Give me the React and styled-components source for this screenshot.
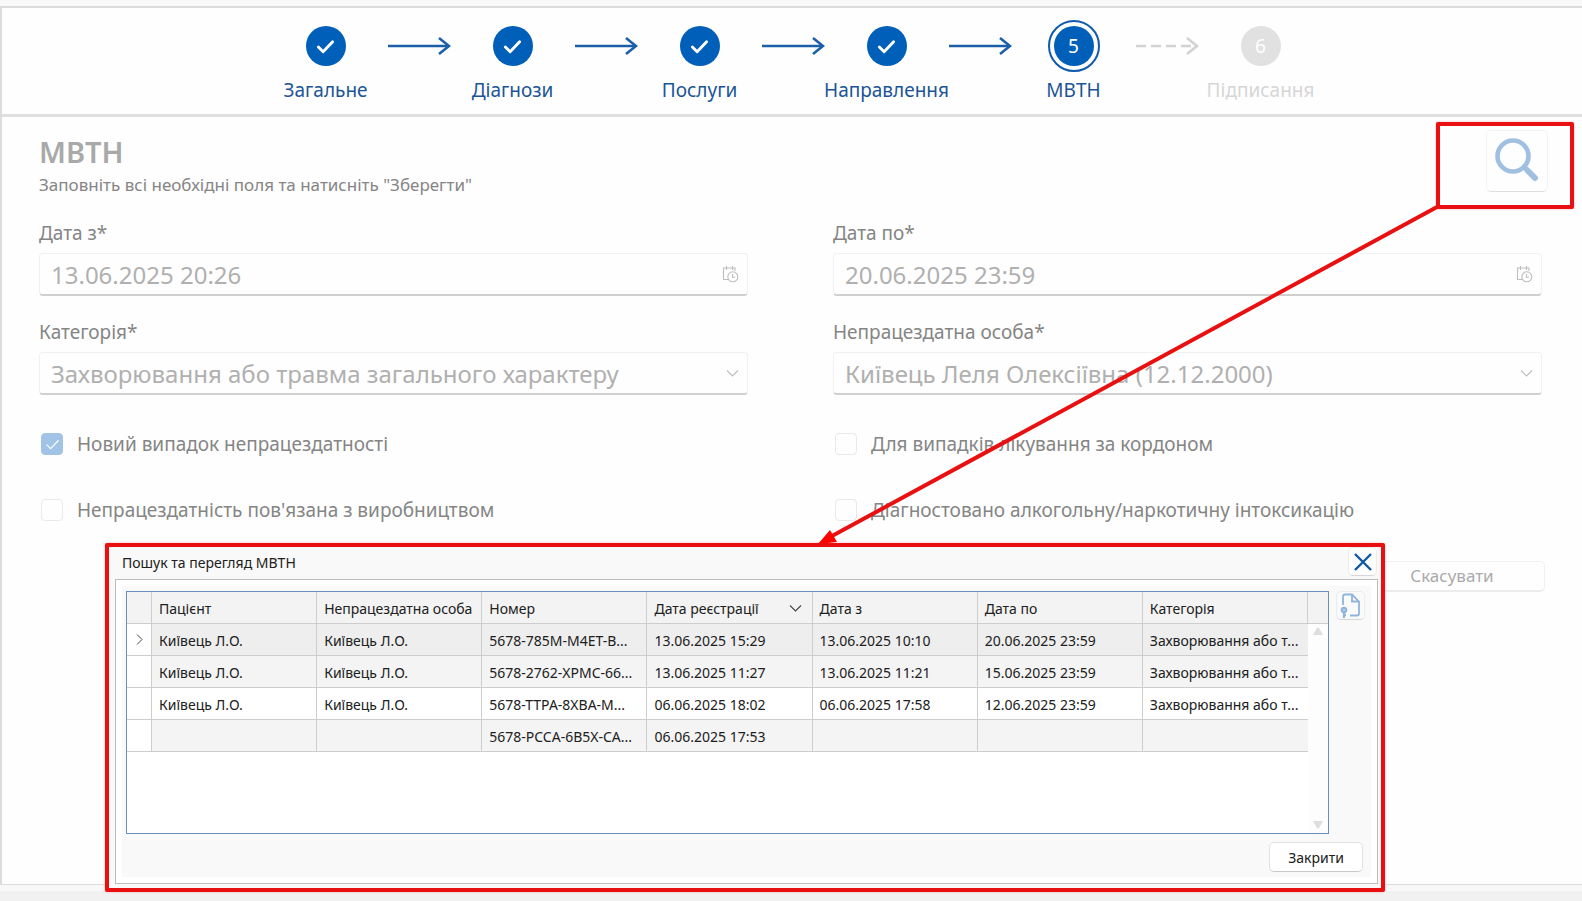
import React from "react";
import styled, { createGlobalStyle, css } from "styled-components";

const GlobalStyle = createGlobalStyle`
  * {
    box-sizing: border-box;
  }
  body {
    margin: 0;
    background: #fdfdfd;
    font-family: "Noto Sans", "Open Sans", sans-serif;
    color: #202020;
  }
  input, select, button {
    font-family: inherit;
  }
`;

const Page = styled.div`
  position: relative;
  display: flex;
  flex-direction: column;
  min-height: 100vh;
  overflow: hidden;
`;
const TopStrip = styled.div`
  height: 6px;
  background: #f8f8f8;
`;
const Window = styled.main`
  flex: 1;
  display: flex;
  flex-direction: column;
  border: 2px solid #dcdcdc;
  border-right: none;
  border-bottom-width: 1px;
  background: #fefefe;
`;
const BottomStrip = styled.div`
  height: 16px;
  border-top: 6px solid #f8f8f8;
  background: #f1f1f1;
`;

const Steps = styled.ol`
  display: flex;
  justify-content: center;
  list-style: none;
  margin: 0;
  padding: 12px 0 11px 2px;
  border-bottom: 3px solid #dfdfdf;
`;
const Step = styled.li`
  display: flex;
  flex-direction: column;
  align-items: center;
  width: 62px;
  color: ${({ $pending }) => ($pending ? "#d6d6d6" : "#1b5597")};
`;
const StepMarker = styled.span`
  display: flex;
  align-items: center;
  justify-content: center;
  width: 52px;
  height: 52px;
  border-radius: 50%;
  border: 2px solid ${({ $current }) => ($current ? "#0f5cae" : "transparent")};
`;
const StepCircle = styled.span`
  display: flex;
  align-items: center;
  justify-content: center;
  width: 40px;
  height: 40px;
  border-radius: 50%;
  background: ${({ $pending }) => ($pending ? "#e1e1e1" : "#005fb8")};
  color: #fff;
  font-size: 19px;
`;
const StepLabel = styled.span`
  margin-top: 5px;
  font-size: 19px;
  line-height: 26px;
  white-space: nowrap;
`;
const StepArrow = styled.li`
  display: flex;
  align-items: center;
  justify-content: center;
  width: 125px;
  height: 52px;
`;

const Form = styled.form`
  flex: 1;
  padding: 19px 37px 20px;
`;
const FormHeader = styled.header`
  display: flex;
  justify-content: space-between;
  height: 84px;
`;
const Title = styled.h1`
  margin: 0;
  font-size: 29px;
  font-weight: 600;
  line-height: 32px;
  color: #a9a9a9;
`;
const Subtitle = styled.p`
  margin: 5px 0 0;
  font-size: 17px;
  line-height: 24px;
  color: #858585;
`;
const SearchButton = styled.button`
  display: flex;
  align-items: center;
  justify-content: center;
  width: 62px;
  height: 62px;
  margin: -6px -3px 0 0;
  padding: 0;
  border: 1px solid #f3f3f3;
  border-bottom-color: #dedede;
  border-radius: 5px;
  background: #fefefe;
`;
const FieldGrid = styled.div`
  display: grid;
  grid-template-columns: 1fr 1fr;
  column-gap: 85px;
  row-gap: 23px;
  padding-right: 3px;
`;
const Field = styled.label`
  display: flex;
  flex-direction: column;
  gap: 7px;
  font-size: 19px;
  line-height: 26px;
  color: #858585;
`;
const FieldBox = styled.span`
  display: flex;
  align-items: center;
  height: 43px;
  padding-right: 8px;
  border: 1px solid #f1f1f1;
  border-bottom: 2px solid #cfcfcf;
  border-radius: 4px;
`;
const controlStyle = css`
  flex: 1;
  min-width: 0;
  height: 100%;
  padding: 0 11px;
  border: none;
  outline: none;
  background: transparent;
  color: #b0b0b0;
  font-size: 24px;
`;
const TextInput = styled.input`
  ${controlStyle}
`;
const Select = styled.select`
  ${controlStyle}
  appearance: none;
`;
const CheckGrid = styled.div`
  display: grid;
  grid-template-columns: 1fr 1fr;
  column-gap: 85px;
  row-gap: 40px;
  margin-top: 36px;
  padding-right: 3px;
`;
const CheckLabel = styled.label`
  display: flex;
  align-items: center;
  gap: 14px;
  padding-left: 2px;
  font-size: 19px;
  line-height: 26px;
  color: #858585;
`;
const CheckMark = styled.span`
  display: grid;
  place-items: center;
  > * {
    grid-area: 1 / 1;
  }
`;
const Checkbox = styled.input`
  appearance: none;
  width: 22px;
  height: 22px;
  margin: 0;
  border: 1px solid #e9e9e9;
  border-radius: 4px;
  &:checked {
    border-color: #a0c3e6;
    background: #a0c3e6;
  }
`;
const FormActions = styled.div`
  display: flex;
  justify-content: flex-end;
  margin-top: 38px;
`;
const CancelButton = styled.button`
  width: 186px;
  height: 31px;
  padding: 0;
  border: 1px solid #f1f1f1;
  border-bottom: 2px solid #ececec;
  border-radius: 5px;
  background: #fefefe;
  color: #ababab;
  font-size: 17px;
  line-height: 24px;
`;

const Dialog = styled.section`
  position: absolute;
  top: 543px;
  left: 105px;
  right: 197px;
  border: 4px solid #e81010;
  border-radius: 2px;
  background: #f9f9f9;
  box-shadow: 0 0 2px #ff9c9c;
  padding: 0 3px 4px 6px;
`;
const DialogTitleBar = styled.header`
  display: flex;
  align-items: flex-start;
  justify-content: space-between;
  height: 32px;
  padding: 0 1px 0 7px;
`;
const DialogTitle = styled.h2`
  margin: 0;
  font-size: 14px;
  font-weight: 400;
  line-height: 32px;
`;
const IconButton = styled.button`
  display: flex;
  align-items: center;
  justify-content: center;
  flex: none;
  width: 29px;
  height: 29px;
  padding: 0;
  border: 1px solid #ececec;
  border-bottom-color: #d6d6d6;
  border-radius: 5px;
  background: ${({ $muted }) => ($muted ? "#fafafa" : "#fff")};
`;
const DialogBody = styled.div`
  padding: 6px;
  border: 1px solid #bdbdbd;
  background: #fff;
`;
const DialogPanel = styled.div`
  padding: 5px 6px 5px 4px;
  background: #f9f9f9;
`;
const GridRow = styled.div`
  display: flex;
  align-items: flex-start;
  gap: 7px;
`;
const GridFrame = styled.div`
  flex: 1;
  display: flex;
  height: 243px;
  border: 1px solid #6b8fbc;
  background: #fff;
`;
const TableArea = styled.div`
  flex: 1;
  min-width: 0;
`;
const Table = styled.table`
  width: 100%;
  table-layout: fixed;
  border-collapse: separate;
  border-spacing: 0;
  font-size: 14px;
  line-height: 20px;
  text-align: left;
`;
const MarkerCol = styled.col`
  width: 25px;
`;
const cellStyle = css`
  height: 32px;
  padding: 2px 5px 0 7px;
  border-right: 1px solid #cdcdcd;
  border-bottom: 1px solid #cdcdcd;
  font-weight: 400;
  white-space: nowrap;
  overflow: hidden;
  text-overflow: ellipsis;
`;
const HeadCell = styled.th`
  ${cellStyle}
  padding-right: 0;
  background: #f3f3f3;
`;
const HeadContent = styled.span`
  display: flex;
  align-items: center;
  justify-content: space-between;
  padding-right: 10px;
`;
const Cell = styled.td`
  ${cellStyle}
  background: ${({ $tone }) => $tone};
  &:last-child {
    border-right: none;
  }
`;
const MarkerCell = styled.td`
  ${cellStyle}
  padding: 0 0 0 8px;
  line-height: 10px;
`;
const ScrollColumn = styled.div`
  display: flex;
  flex-direction: column;
  align-items: center;
  width: 20px;
  padding-bottom: 4px;
  background: #fdfdfd;
`;
const ScrollCap = styled.div`
  width: 100%;
  height: 32px;
  margin-bottom: 3px;
  border-bottom: 1px solid #cdcdcd;
  background: #f3f3f3;
`;
const ScrollSpacer = styled.div`
  flex: 1;
`;
const DialogActions = styled.div`
  display: flex;
  justify-content: flex-end;
  padding: 8px 2px 0 0;
`;
const CloseButton = styled.button`
  width: 94px;
  height: 30px;
  padding: 0;
  border: 1px solid #e2e2e2;
  border-bottom-color: #c8c8c8;
  border-radius: 5px;
  background: #fff;
  color: #202020;
  font-size: 14px;
`;

const SearchHighlight = styled.div`
  position: absolute;
  top: 122px;
  right: 8px;
  width: 138px;
  height: 87px;
  border: 4px solid #e81010;
  border-radius: 2px;
  box-shadow: 0 0 2px #ff9c9c;
  pointer-events: none;
`;
const PointerArrow = styled.svg`
  position: absolute;
  top: 205px;
  right: 144px;
  width: 620px;
  height: 341px;
  pointer-events: none;
`;

const steps = [
  { label: "Загальне", state: "done" },
  { label: "Діагнози", state: "done" },
  { label: "Послуги", state: "done" },
  { label: "Направлення", state: "done" },
  { label: "МВТН", state: "current" },
  { label: "Підписання", state: "pending" },
];

const columns = [
  "Пацієнт",
  "Непрацездатна особа",
  "Номер",
  "Дата реєстрації",
  "Дата з",
  "Дата по",
  "Категорія",
];
const SORTED_COLUMN = "Дата реєстрації";

const person = "Київець Л.О.";
const category = "Захворювання або травма загального характеру";

const rows = [
  {
    tone: "#eeeeee",
    cells: [person, person, "5678-785M-M4ET-B...", "13.06.2025 15:29", "13.06.2025 10:10", "20.06.2025 23:59", "Захворювання або т..."],
  },
  {
    tone: "#f4f4f4",
    cells: [person, person, "5678-2762-XPMC-66...", "13.06.2025 11:27", "13.06.2025 11:21", "15.06.2025 23:59", "Захворювання або т..."],
  },
  {
    tone: "#ffffff",
    cells: [person, person, "5678-TTPA-8XBA-M...", "06.06.2025 18:02", "06.06.2025 17:58", "12.06.2025 23:59", "Захворювання або т..."],
  },
  {
    tone: "#f4f4f4",
    cells: ["", "", "5678-PCCA-6B5X-CA...", "06.06.2025 17:53", "", "", ""],
  },
];

const CheckIcon = ({ size, width }) => (
  <svg width={size} height={size} viewBox="0 0 20 20" fill="none" stroke="#fff" strokeWidth={width} strokeLinecap="round" strokeLinejoin="round">
    <path d="M2.500 10.500l5 5L17.500 5" />
  </svg>
);

const ArrowIcon = ({ dashed }) => (
  <svg width="64" height="22" viewBox="0 0 64 22" fill="none" stroke={dashed ? "#d2d2d2" : "#1b5fa8"} strokeWidth="2.600">
    <path d="M1 11h60" strokeDasharray={dashed ? "10 5" : undefined} />
    <path d="M52 3l10 8-10 8" />
  </svg>
);

const ChevronDown = ({ color }) => (
  <svg width="13" height="9" viewBox="0 0 13 9" fill="none" stroke={color} strokeWidth="1.100">
    <path d="M1 1.500l5.500 5.500L12 1.500" />
  </svg>
);

const CalendarClockIcon = () => (
  <svg width="17" height="18" viewBox="0 0 17 18" fill="none" stroke="#bdbdbd" strokeWidth="1.100">
    <path d="M6 14.500H1.500V3H13v3M4.500 1v4M10.500 1v4" />
    <circle cx="10.800" cy="11.800" r="5" />
    <path d="M10.500 9v3.200H13" />
  </svg>
);

const SearchIcon = () => (
  <svg width="46" height="46" viewBox="0 0 46 46" fill="none" stroke="#a0c0e2" strokeLinecap="round">
    <circle cx="19" cy="18" r="15.500" strokeWidth="4.600" />
    <path d="M30 29l4 4" strokeWidth="4.600" />
    <path d="M33.500 32.500l7.500 7.500" strokeWidth="6" />
  </svg>
);

const CloseIcon = () => (
  <svg width="18" height="18" viewBox="0 0 18 18" fill="none" stroke="#0f59a4" strokeWidth="2.400">
    <path d="M1 1l16 16M17 1L1 17" />
  </svg>
);

const SignedFileIcon = () => (
  <svg width="21" height="25" viewBox="0 0 21 25" fill="none" stroke="#8fb5dc" strokeWidth="1.800">
    <path d="M3 12V3.500Q3 1.500 5 1.500H12L19 8.500V20.500Q19 22.500 17 22.500H10" />
    <path d="M12 1.500V8.500H19" />
    <circle cx="4" cy="17" r="2" strokeWidth="2.600" />
    <path d="M4 19v6M4 22h2" strokeWidth="2.200" />
  </svg>
);

const Triangle = ({ down }) => (
  <svg width="10" height="8" viewBox="0 0 10 8" fill="#dedede">
    <path d={down ? "M0 0h10L6 7q-1 1-2 0z" : "M0 8h10L6 1q-1-1-2 0z"} />
  </svg>
);

const StepBar = () => (
  <Steps>
    {steps.map(({ label, state }, index) => (
      <React.Fragment key={label}>
        {index > 0 && (
          <StepArrow aria-hidden="true">
            <ArrowIcon dashed={state === "pending"} />
          </StepArrow>
        )}
        <Step $pending={state === "pending"}>
          <StepMarker $current={state === "current"}>
            <StepCircle $pending={state === "pending"}>
              {state === "done" ? <CheckIcon size={19} width={3} /> : index + 1}
            </StepCircle>
          </StepMarker>
          <StepLabel>{label}</StepLabel>
        </Step>
      </React.Fragment>
    ))}
  </Steps>
);

const DateField = ({ label, value }) => (
  <Field>
    {label}
    <FieldBox>
      <TextInput type="text" defaultValue={value} readOnly />
      <CalendarClockIcon />
    </FieldBox>
  </Field>
);

const SelectField = ({ label, value }) => (
  <Field>
    {label}
    <FieldBox>
      <Select defaultValue={value}>
        <option>{value}</option>
      </Select>
      <ChevronDown color="#bdbdbd" />
    </FieldBox>
  </Field>
);

const CheckField = ({ label, checked }) => (
  <CheckLabel>
    <CheckMark>
      <Checkbox type="checkbox" defaultChecked={checked} />
      {checked && <CheckIcon size={15} width={1.6} />}
    </CheckMark>
    {label}
  </CheckLabel>
);

const SearchDialog = () => (
  <Dialog role="dialog" aria-labelledby="dialog-title">
    <DialogTitleBar>
      <DialogTitle id="dialog-title">Пошук та перегляд МВТН</DialogTitle>
      <IconButton type="button" aria-label="Закрити вікно">
        <CloseIcon />
      </IconButton>
    </DialogTitleBar>
    <DialogBody>
      <DialogPanel>
        <GridRow>
          <GridFrame>
            <TableArea>
              <Table>
                <colgroup>
                  <MarkerCol />
                  {columns.map((column) => (
                    <col key={column} />
                  ))}
                </colgroup>
                <thead>
                  <tr>
                    <HeadCell />
                    {columns.map((column) => (
                      <HeadCell key={column}>
                        {column === SORTED_COLUMN ? (
                          <HeadContent>
                            {column}
                            <ChevronDown color="#444" />
                          </HeadContent>
                        ) : (
                          column
                        )}
                      </HeadCell>
                    ))}
                  </tr>
                </thead>
                <tbody>
                  {rows.map(({ tone, cells }, rowIndex) => (
                    <tr key={rowIndex}>
                      <MarkerCell>
                        {rowIndex === 0 && (
                          <svg width="8" height="11" viewBox="0 0 8 11" fill="none" stroke="#444">
                            <path d="M2 0.500l5 5-5 5" />
                          </svg>
                        )}
                      </MarkerCell>
                      {cells.map((cell, index) => (
                        <Cell key={index} $tone={tone}>
                          {cell}
                        </Cell>
                      ))}
                    </tr>
                  ))}
                </tbody>
              </Table>
            </TableArea>
            <ScrollColumn>
              <ScrollCap />
              <Triangle />
              <ScrollSpacer />
              <Triangle down />
            </ScrollColumn>
          </GridFrame>
          <IconButton type="button" $muted aria-label="Підписаний документ">
            <SignedFileIcon />
          </IconButton>
        </GridRow>
        <DialogActions>
          <CloseButton type="button">Закрити</CloseButton>
        </DialogActions>
      </DialogPanel>
    </DialogBody>
  </Dialog>
);

const App = () => (
  <>
    <GlobalStyle />
    <Page>
      <TopStrip />
      <Window>
        <StepBar />
        <Form>
          <FormHeader>
            <div>
              <Title>МВТН</Title>
              <Subtitle>Заповніть всі необхідні поля та натисніть "Зберегти"</Subtitle>
            </div>
            <SearchButton type="button" aria-label="Пошук">
              <SearchIcon />
            </SearchButton>
          </FormHeader>
          <FieldGrid>
            <DateField label="Дата з*" value="13.06.2025 20:26" />
            <DateField label="Дата по*" value="20.06.2025 23:59" />
            <SelectField label="Категорія*" value={category} />
            <SelectField label="Непрацездатна особа*" value="Київець Леля Олексіївна (12.12.2000)" />
          </FieldGrid>
          <CheckGrid>
            <CheckField label="Новий випадок непрацездатності" checked />
            <CheckField label="Для випадків лікування за кордоном" />
            <CheckField label="Непрацездатність пов'язана з виробництвом" />
            <CheckField label="Діагностовано алкогольну/наркотичну інтоксикацію" />
          </CheckGrid>
          <FormActions>
            <CancelButton type="button">Скасувати</CancelButton>
          </FormActions>
        </Form>
      </Window>
      <BottomStrip />
      <SearchDialog />
      <SearchHighlight />
      <PointerArrow viewBox="0 0 620 341">
        <path d="M619 2L14 331" stroke="#e81010" strokeWidth="4" />
        <path d="M0 339l12-14 7 12z" fill="#ff0000" />
      </PointerArrow>
    </Page>
  </>
);

export default App;
